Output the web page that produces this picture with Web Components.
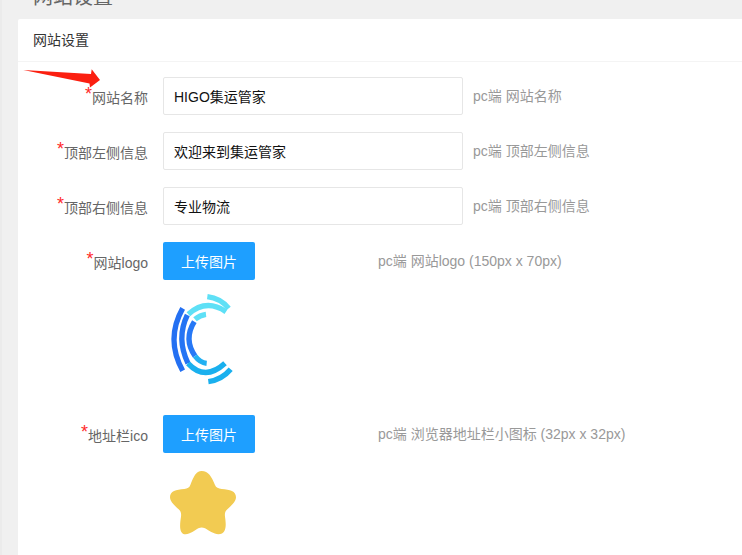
<!DOCTYPE html>
<html lang="zh">
<head>
<meta charset="utf-8">
<title>网站设置</title>
<style>
html, body { margin: 0; height: 555px; overflow: hidden; background: #f0f0f0; }
body { font-family: "Liberation Sans", "Noto Sans CJK SC", sans-serif; font-size: 14px; }
</style>
</head>
<body>
<settings-page>
	<settings-field label="网站名称" hint="pc端 网站名称" value="HIGO集运管家"></settings-field>
	<settings-field label="顶部左侧信息" hint="pc端 顶部左侧信息" value="欢迎来到集运管家"></settings-field>
	<settings-field label="顶部右侧信息" hint="pc端 顶部右侧信息" value="专业物流"></settings-field>
	<upload-field label="网站logo" hint="pc端 网站logo (150px x 70px)" preview="107">
		<svg width="110" height="107" viewBox="0 0 330 321" fill="none" stroke-width="16" style="margin-left:-13px">
			<g transform="translate(0 -15)">
				<path d="M98 85 Q46 178 98 272" stroke="#2470f2"/>
				<path d="M112 105 Q78 175 114 250" stroke="#2474f4"/>
				<path d="M133 125 Q100 178 135 228" stroke="#2678f6"/>
				<path d="M135 228 Q150 248 170 250" stroke="#22b0f2"/>
				<path d="M114 250 Q165 305 225 250" stroke="#1ab0ee"/>
				<path d="M115 103 Q168 55 228 95" stroke="#5ee0f6"/>
				<path d="M135 118 Q150 105 168 103" stroke="#5ee0f6"/>
				<path d="M172 50 Q212 55 236 85" stroke="#5ee0f6"/>
				<path d="M175 305 Q215 300 242 268" stroke="#1ab0ee"/>
			</g>
		</svg>
	</upload-field>
	<upload-field label="地址栏ico" hint="pc端 浏览器地址栏小图标 (32px x 32px)" preview="85">
		<svg width="70" height="70" viewBox="54 183 210 210" style="margin:13px 0 0 5px">
			<path d="M155 198 C175 198 185 215 195 240 C198 248 205 250 215 252 C240 254 258 258 258 277 C258 292 240 305 232 313 C225 320 224 325 225 335 C228 355 232 388 205 388 C192 388 175 375 165 370 C158 367 152 367 145 370 C135 375 120 388 107 388 C85 388 90 355 93 335 C94 325 93 320 86 313 C78 305 60 292 60 277 C60 258 78 254 103 252 C113 250 118 248 121 240 C131 215 138 198 155 198 Z" fill="#f2cb52"/>
		</svg>
	</upload-field>
</settings-page>
<script>
const labelStyles = `
	.label { width: 145px; padding: 2px 15px 0 0; box-sizing: border-box; text-align: right; color: #666; white-space: nowrap; }
	.label b { font-weight: 400; color: #ff2a2a; font-size: 18px; position: relative; top: -3px; line-height: 0; }
	.hint { padding-bottom: 2px; color: #999; white-space: nowrap; }
`;

class SettingsPage extends HTMLElement {
	constructor() {
		super();
		this.attachShadow({ mode: 'open' });
		this.shadowRoot.innerHTML = `
		<style>
			:host { display: block; position: relative; height: 555px; overflow: hidden; color: #333; }
			h1 {
				margin: -3px 0 0;
				height: 22px;
				padding-left: 33px;
				font-size: 20px;
				font-weight: 400;
				line-height: 0;
				color: #666;
			}
			.strip { position: absolute; left: 0; top: 0; bottom: 0; width: 2px; background: #ebebeb; }
			.card { margin-left: 18px; height: 536px; background: #fff; border-radius: 2px 0 0 0; }
			.head {
				box-sizing: border-box;
				height: 43px;
				padding-left: 15px;
				line-height: 42px;
				color: #333;
				border-bottom: 1px solid #f4f4f4;
			}
			.body { display: flex; flex-direction: column; padding-top: 15px; }
			.arrow { position: absolute; left: 23px; top: 69px; }
		</style>
		<div class="strip"></div>
		<h1>网站设置</h1>
		<section class="card">
			<div class="head">网站设置</div>
			<div class="body"><slot></slot></div>
		</section>
		<svg class="arrow" width="78" height="20" viewBox="0 0 78 20"><path d="M0.3 1 L68 5 L68.7 0.3 L77 11 L67 18.5 L66.5 14.5 Z" fill="#fb1f10"/></svg>
		`;
	}
}

class SettingsField extends HTMLElement {
	constructor() {
		super();
		this.attachShadow({ mode: 'open' });
		this.shadowRoot.innerHTML = `
		<style>
			:host { display: flex; align-items: center; height: 38px; margin-bottom: 17px; }
			${labelStyles}
			input {
				box-sizing: border-box;
				width: 300px;
				height: 38px;
				padding: 0 10px;
				border: 1px solid #e6e6e6;
				border-radius: 2px;
				outline: none;
				font: inherit;
				color: #111;
				background: #fff;
			}
			.hint { margin-left: 10px; }
		</style>
		<div class="label"><b>*</b><span class="name"></span></div>
		<input type="text">
		<span class="hint"></span>
		`;
		this.shadowRoot.querySelector('.name').textContent = this.getAttribute('label');
		this.shadowRoot.querySelector('input').setAttribute('value', this.getAttribute('value'));
		this.shadowRoot.querySelector('.hint').textContent = this.getAttribute('hint');
	}
}

class UploadField extends HTMLElement {
	constructor() {
		super();
		this.attachShadow({ mode: 'open' });
		this.shadowRoot.innerHTML = `
		<style>
			:host { display: block; margin-bottom: 23px; }
			.row { display: flex; align-items: center; height: 38px; }
			${labelStyles}
			button {
				box-sizing: border-box;
				width: 92px;
				height: 38px;
				padding: 0;
				border: 0;
				border-radius: 2px;
				background: #1e9fff;
				color: #fff;
				font: inherit;
			}
			.hint { margin-left: 123px; }
			.preview { margin: 5px 0 0 145px; }
			::slotted(svg) { display: block; }
		</style>
		<div class="row">
			<div class="label"><b>*</b><span class="name"></span></div>
			<button type="button">上传图片</button>
			<span class="hint"></span>
		</div>
		<div class="preview"><slot></slot></div>
		`;
		this.shadowRoot.querySelector('.name').textContent = this.getAttribute('label');
		this.shadowRoot.querySelector('.hint').textContent = this.getAttribute('hint');
		this.shadowRoot.querySelector('.preview').style.height = this.getAttribute('preview') + 'px';
	}
}

customElements.define('settings-page', SettingsPage);
customElements.define('settings-field', SettingsField);
customElements.define('upload-field', UploadField);
</script>
</body>
</html>
